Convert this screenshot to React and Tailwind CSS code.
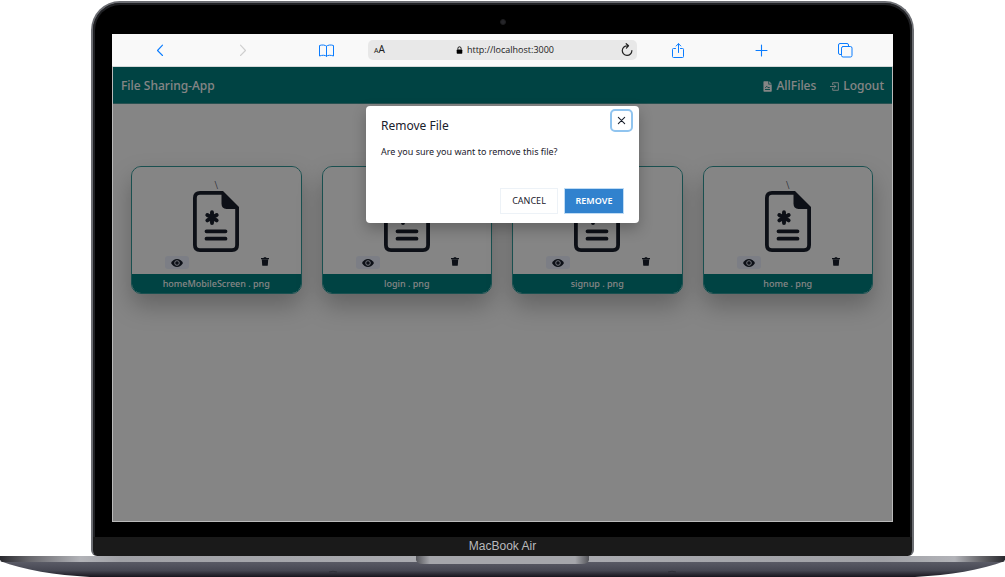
import React from "react";

const files = ["homeMobileScreen . png", "login . png", "signup . png", "home . png"];

function Stroke({ className, children, width = 1.1, box = "0 0 16 16" }) {
  return (
    <svg viewBox={box} className={className} fill="none" stroke="currentColor" strokeWidth={width} strokeLinecap="round" strokeLinejoin="round" aria-hidden="true">
      {children}
    </svg>
  );
}

function BrowserBar() {
  return (
    <div className="flex h-[33px] items-center border-b border-[#d4d8d8] bg-[#f9f9f9] text-[#0a7cff]">
      <div className="flex flex-1 items-center justify-between pr-[33px] pl-10">
        <button aria-label="Back" className="flex">
          <Stroke className="size-4"><path d="M10.5 3.2 L5.5 8.5 L10.5 13.5" /></Stroke>
        </button>
        <button aria-label="Forward" className="flex text-[#cfcfcf]">
          <Stroke className="size-4"><path d="M4.5 3.2 L9.5 8.5 L4.5 13.5" /></Stroke>
        </button>
        <button aria-label="Bookmarks" className="flex">
          <Stroke className="size-4" width={1}>
            <path d="M7.5 4.2 C6.5 2.7 2.5 2.7 .5 3.5 V14 C3 13 6.5 13 7.5 14.3 C8.5 13 12 13 14.5 14 V3.5 C12.5 2.7 8.5 2.7 7.5 4.2 Z M7.5 4.2 V14.3" />
          </Stroke>
        </button>
      </div>
      <div className="flex h-5 w-[269px] items-center justify-between rounded-[5px] bg-[#e8e8e8] pr-1 pl-1.5 text-[#222]">
        <button aria-label="Text size" className="flex items-baseline leading-4">
          <span className="text-[7px]">A</span>
          <span className="text-[10px]">A</span>
        </button>
        <div className="flex items-center gap-1 pl-1 font-['Open_Sans','Noto_Sans',sans-serif] text-[9px] leading-4">
          <svg viewBox="0 0 8 10" className="h-2 w-[7px]" aria-hidden="true">
            <path d="M2 4.5 V3 a2 2 0 0 1 4 0 V4.5" fill="none" stroke="#000" strokeWidth="1.1" />
            <rect x=".5" y="4.3" width="7" height="5.4" rx=".9" fill="#000" />
          </svg>
          <span>http://localhost:3000</span>
        </div>
        <button aria-label="Reload" className="flex">
          <Stroke className="h-3.5 w-3" width={1.2} box="0 0 12 14">
            <path d="M6.5 2.8 A4.8 4.8 0 1 0 10.9 7.6 M5.2 .7 L7.5 2.8 L5.4 5.1" />
          </Stroke>
        </button>
      </div>
      <div className="flex flex-1 items-center justify-between pr-10 pl-[33px]">
        <button aria-label="Share" className="flex">
          <Stroke className="size-4" width={1}>
            <path d="M5.5 6.5 H3.5 Q2.5 6.5 2.5 7.3 V14.5 Q2.5 15.5 3.5 15.5 H12.5 Q13.5 15.5 13.5 14.5 V7.3 Q13.5 6.5 12.5 6.5 H10.5 M8.5 10.5 V1.8 M6.2 4 L8.5 1.6 L10.8 4" />
          </Stroke>
        </button>
        <button aria-label="New tab" className="flex">
          <Stroke className="size-4"><path d="M7.5 3 V14 M2 8.5 H13" /></Stroke>
        </button>
        <button aria-label="Tabs" className="flex">
          <Stroke className="size-4" width={1}>
            <rect x="4.5" y="4.5" width="10.5" height="10.5" rx="1.6" />
            <path d="M4.5 12.5 H3 Q1.5 12.5 1.5 11 V3 Q1.5 1.5 3 1.5 H10 Q11.5 1.5 11.5 3 V4.5" />
          </Stroke>
        </button>
      </div>
    </div>
  );
}

function FileCard({ name }) {
  return (
    <article className="overflow-hidden rounded-[10px] border border-[#329999] shadow-[0_12px_24px_rgba(0,0,0,0.26)]">
      <div className="flex h-[107px] flex-col items-center bg-white/50 pt-3">
        <span className="text-[10px] leading-3 font-light text-gray-700">\</span>
        <svg viewBox="0 0 46 61" className="h-[61px] w-[46px] shrink-0 text-[#1a202c]" aria-hidden="true">
          <path d="M29 1.9 H7 Q1.9 1.9 1.9 7 V54 Q1.9 59.1 7 59.1 H39 Q44.1 59.1 44.1 54 V17" fill="none" stroke="currentColor" strokeWidth="3.8" />
          <path d="M28.5 0 H30 L46 16 V18 H33.5 Q28.5 17.5 28.5 12.5 Z" fill="currentColor" />
          <path d="M19 21.3 V32.1 M14.3 24 L23.7 29.4 M14.3 29.4 L23.7 24" fill="none" stroke="currentColor" strokeWidth="3.9" strokeLinecap="round" />
          <path d="M13.5 40.3 H32.5 M13.5 47.7 H32.5" fill="none" stroke="currentColor" strokeWidth="3.8" strokeLinecap="round" />
        </svg>
        <div className="flex w-full items-center justify-between pt-1 pr-8 pl-[33px] text-[#1a202c]">
          <button aria-label={"View " + name} className="flex h-[13px] w-6 items-center justify-center rounded-[3px] bg-[#edf2ff]">
            <svg viewBox="0 0 12 8" className="h-2 w-3" aria-hidden="true">
              <path d="M0 4 Q2.3 0 6 0 T12 4 Q9.7 8 6 8 T0 4Z" fill="currentColor" />
              <circle cx="6" cy="4" r="2.3" fill="none" stroke="#edf2ff" strokeWidth=".9" />
            </svg>
          </button>
          <button aria-label={"Delete " + name} className="flex h-[13px] items-start pt-px">
            <svg viewBox="0 0 8 9" className="h-[9px] w-2" fill="currentColor" aria-hidden="true">
              <path d="M0 1 H2.5 L3 .2 H5 L5.5 1 H8 V2.2 H0Z M.8 2.6 H7.2 L6.8 8.2 Q6.7 8.8 6.1 8.8 H1.9 Q1.3 8.8 1.2 8.2Z" />
            </svg>
          </button>
        </div>
      </div>
      <h2 className="bg-[#008080] text-center text-[9px] leading-[19px] font-medium text-white">{name}</h2>
    </article>
  );
}

function Dialog() {
  return (
    <div className="absolute inset-0 flex items-start justify-center bg-black/48 pt-[39px]">
      <section role="dialog" aria-modal="true" aria-labelledby="dialog-title" className="w-[273px] rounded-[4px] bg-white px-[15px] pt-[3px] pb-[9px] text-[#1a202c] shadow-[0_6px_14px_rgba(0,0,0,0.25)]">
        <div className="-mr-[9px] flex items-start justify-between">
          <h2 id="dialog-title" className="pt-[7px] text-[12px] leading-5">Remove File</h2>
          <button aria-label="Close" className="flex size-[23px] items-center justify-center rounded-[5px] border-2 border-[#90c4ef]">
            <Stroke className="size-[9px]" width={1.2} box="0 0 10 10"><path d="M1.5 1.5 L8.5 8.5 M8.5 1.5 L1.5 8.5" /></Stroke>
          </button>
        </div>
        <p className="pt-2 text-[9px] leading-4">Are you sure you want to remove this file?</p>
        <div className="flex justify-end gap-1.5 pt-7">
          <button className="h-[26px] w-[58px] border border-[#edf2f7] text-[9px]">CANCEL</button>
          <button className="h-[26px] w-[60px] border border-[#bfdcf5] bg-[#3182ce] text-[9px] font-semibold text-white">REMOVE</button>
        </div>
      </section>
    </div>
  );
}

function FileApp() {
  return (
    <div className="relative border-x border-b border-[#bababa] bg-white">
      <nav className="flex h-[37px] items-center justify-between border-b border-[#4d9c9c] bg-[#008080] px-2 pt-0.5 text-[12px] font-medium text-white">
        <a href="#home">File Sharing-App</a>
        <div className="flex items-center gap-3.5">
          <a href="#files" className="flex items-center gap-1">
            <svg viewBox="0 0 10 12" className="h-[11px] w-[9px]" aria-hidden="true">
              <path d="M.5 1 Q.5 .3 1.2 .3 H6 V3.8 H9.7 V11 Q9.7 11.7 9 11.7 H1.2 Q.5 11.7 .5 11Z M6.8 .3 L9.7 3 H6.8Z" fill="currentColor" />
              <path d="M2.2 9.3 H7.8 M2.5 7.5 L4.2 5.8 L5.5 7.2 H7.5" stroke="#008080" fill="none" />
            </svg>
            AllFiles
          </a>
          <a href="#logout" className="flex items-center gap-1">
            <Stroke className="size-[9px]" width={1} box="0 0 10 10">
              <path d="M3 3 V.8 H9.3 V9.2 H3 V7 M.4 5 H6.3 M4.5 3 L6.5 5 L4.5 7" />
            </Stroke>
            Logout
          </a>
        </div>
      </nav>
      <main className="grid min-h-[417px] grid-cols-4 items-start gap-5 pt-[62px] pr-[19px] pl-[18px]">
        {files.map((name) => <FileCard key={name} name={name} />)}
      </main>
      <Dialog />
    </div>
  );
}

function LaptopBase() {
  return (
    <svg viewBox="0 0 1005 21" preserveAspectRatio="none" className="block h-[21px] w-full" aria-hidden="true">
      <defs>
        <linearGradient id="edge">
          <stop offset="0" stopColor="#29292e" />
          <stop offset=".03" stopColor="#68686d" />
          <stop offset=".08" stopColor="#b2b3b8" />
          <stop offset=".12" stopColor="#a0a1a6" />
          <stop offset=".5" stopColor="#acadb2" />
          <stop offset=".88" stopColor="#a0a1a6" />
          <stop offset=".95" stopColor="#b2b3b8" />
          <stop offset=".975" stopColor="#68686d" />
          <stop offset="1" stopColor="#29292e" />
        </linearGradient>
        <linearGradient id="under" x2="0" y2="1">
          <stop offset="0" stopColor="#5c5d68" />
          <stop offset=".6" stopColor="#464752" />
          <stop offset="1" stopColor="#17151d" />
        </linearGradient>
        <linearGradient id="notch">
          <stop offset="0" stopColor="#55565b" />
          <stop offset=".08" stopColor="#a5a6ab" />
          <stop offset=".92" stopColor="#a5a6ab" />
          <stop offset="1" stopColor="#55565b" />
        </linearGradient>
      </defs>
      <path d="M0 5 C24 14 55 19 90 21 H915 C950 19 981 14 1005 5Z" fill="url(#under)" />
      <path d="M0 0 H1005 V4 L1003 6 H2 L0 4Z" fill="url(#edge)" />
      <path d="M416 0 H589 V4 Q588 8 582 8 H423 Q417 8 416 4Z" fill="url(#notch)" />
      <path d="M329 16 Q333 14.5 337 16 M668 16 Q672 14.5 676 16" fill="none" stroke="#2c2c33" strokeWidth=".8" />
    </svg>
  );
}

export default function App() {
  return (
    <div className="overflow-hidden bg-white pt-px font-['Noto_Sans','Open_Sans',sans-serif]">
      <div className="mx-[91px] rounded-t-[29px] rounded-b-[6px] border-2 border-b-0 border-[#6c6e73] bg-[#1a1a1a]">
        <div className="rounded-t-[27px] border-2 border-b-0 border-[#202124] bg-black px-[17px] pb-[15px]">
          <div className="flex h-[29px] items-center justify-center pt-1">
            <span className="size-1.5 rounded-full border border-[#1c1c1e] bg-[#252529]" />
          </div>
          <div>
            <BrowserBar />
            <FileApp />
          </div>
        </div>
        <p className="text-center font-['Liberation_Sans','Inter',sans-serif] text-[12px] leading-[19px] text-[#b9b9bc]">MacBook Air</p>
      </div>
      <LaptopBase />
    </div>
  );
}
